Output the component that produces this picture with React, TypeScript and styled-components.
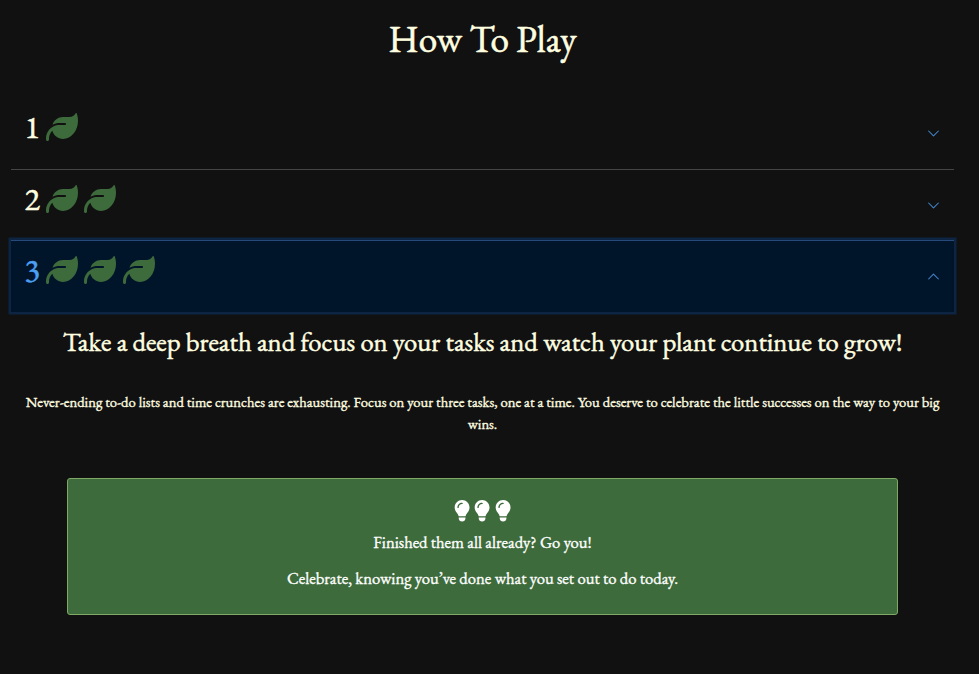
import React, { useState } from "react";
import styled, { createGlobalStyle } from "styled-components";
import { FaLeaf, FaLightbulb } from "react-icons/fa6";

const GlobalStyle = createGlobalStyle`
  * { box-sizing: border-box; }
  body {
    margin: 0;
    background: #111111;
    color: #ffffe0;
    font-family: "EB Garamond", "Liberation Serif", serif;
  }
`;

const Page = styled.main`
  width: 943px;
  height: 674px;
  margin-left: 11px;
  overflow: visible;
`;

const Title = styled.h1`
  margin: 0;
  height: 98px;
  padding-top: 15px;
  font-size: 37.2px;
  font-weight: 400;
  line-height: 48px;
  text-align: center;
  -webkit-text-stroke: 0.6px currentColor;
`;

const Header = styled.button<{ $open: boolean; $first: boolean }>`
  display: flex;
  width: 100%;
  height: ${(p) => (p.$open ? 72 : 71)}px;
  margin: 0;
  padding: 11px 14px 0;
  align-items: flex-start;
  border: 0;
  border-top: ${(p) => (p.$first ? "0" : p.$open ? "1px solid #264a7b" : "1px solid #454545")};
  background: ${(p) => (p.$open ? "#001529" : "transparent")};
  box-shadow: ${(p) => (p.$open ? "0 0 0 2.5px #0d2443" : "none")};
  color: ${(p) => (p.$open ? "#4ba0f4" : "#ffffe0")};
  font-family: inherit;
  text-align: left;
`;

const StepNumber = styled.span`
  width: 21.5px;
  margin-left: -0.5px;
  font-size: 32px;
  line-height: 36px;
  -webkit-text-stroke: 0.5px currentColor;
`;

const Leaves = styled.span`
  display: flex;
  flex: 1;
  gap: 6.4px;
  padding-top: 2px;
  color: #3d6b3b;
  font-size: 32px;
`;

const Chevron = styled.svg<{ $open: boolean }>`
  width: 13px;
  height: 13px;
  margin-top: 18px;
  fill: #4287cc;
  stroke: #4287cc;
  stroke-width: 0.3;
  transform: ${(p) => (p.$open ? "rotate(180deg)" : "none")};
`;

const Panel = styled.section`
  text-align: center;
`;

const Heading = styled.h2`
  margin: 0;
  padding-top: 13px;
  height: 79px;
  font-size: 26.68px;
  font-weight: 400;
  line-height: 34px;
  white-space: nowrap;
  -webkit-text-stroke: 0.5px currentColor;
`;

const Lead = styled.p`
  margin: 0;
  height: 87px;
  font-size: 14.66px;
  line-height: 22px;
  white-space: nowrap;
  -webkit-text-stroke: 0.35px currentColor;
`;

const Card = styled.div`
  width: 831px;
  height: 137px;
  margin: 0 auto;
  padding-top: 21px;
  border: 1px solid #7fa965;
  border-radius: 3px;
  background: #3d6b3b;
  color: #ffffff;
`;

const Bulbs = styled.div`
  display: flex;
  justify-content: center;
  gap: 4px;
  height: 31px;

  svg {
    width: 16.2px;
    height: 21.6px;
  }
`;

const CardText = styled.p`
  margin: 0 0 14px;
  font-size: 16.65px;
  line-height: 22px;
  -webkit-text-stroke: 0.35px currentColor;
`;

const steps = [1, 2, 3];

export default function App() {
  const [active, setActive] = useState(3);
  return (
    <>
      <GlobalStyle />
      <Page>
        <Title>How To Play</Title>
        {steps.map((step) => {
          const open = active === step;
          return (
            <Header
              key={step}
              type="button"
              $open={open}
              $first={step === 1}
              aria-expanded={open}
              onClick={() => setActive(step)}
            >
              <StepNumber>{step}</StepNumber>
              <Leaves>
                {Array.from({ length: step }, (_, i) => (
                  <FaLeaf key={i} />
                ))}
              </Leaves>
              <Chevron $open={open} viewBox="0 0 16 16" aria-hidden="true">
                <path d="M1.646 4.646a.5.5 0 0 1 .708 0L8 10.293l5.646-5.647a.5.5 0 0 1 .708.708l-6 6a.5.5 0 0 1-.708 0l-6-6a.5.5 0 0 1 0-.708z" />
              </Chevron>
            </Header>
          );
        })}
        <Panel>
          <Heading>Take a deep breath and focus on your tasks and watch your plant continue to grow!</Heading>
          <Lead>
            Never-ending to-do lists and time crunches are exhausting. Focus on your three tasks, one at a
            time. You deserve to celebrate the little successes on the way to your big
            <br />
            wins.
          </Lead>
          <Card>
            <Bulbs>
              <FaLightbulb />
              <FaLightbulb />
              <FaLightbulb />
            </Bulbs>
            <CardText>Finished them all already? Go you!</CardText>
            <CardText>Celebrate, knowing you’ve done what you set out to do today.</CardText>
          </Card>
        </Panel>
      </Page>
    </>
  );
}
